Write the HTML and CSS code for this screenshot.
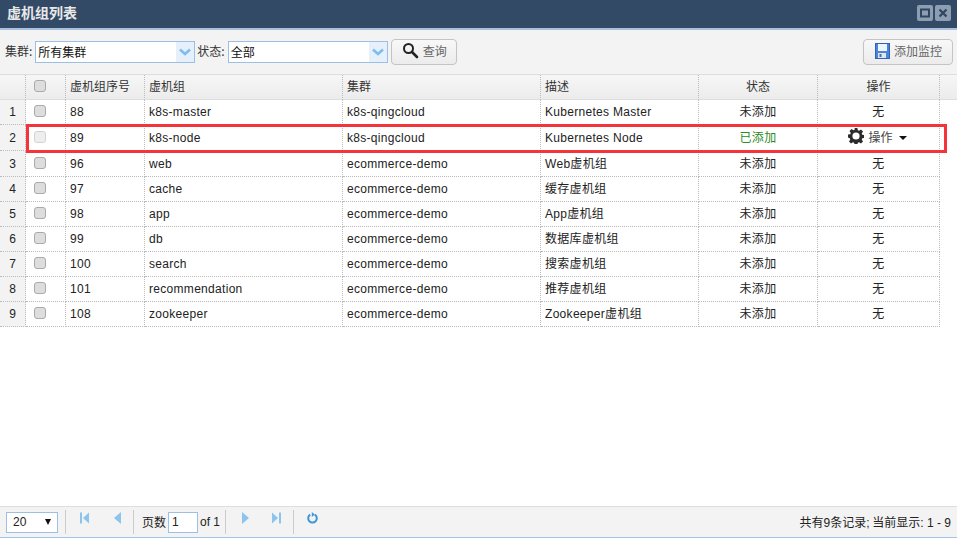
FILE: index.html
```html
<!DOCTYPE html>
<html>
<head>
<title>虚机组列表</title>
<meta charset="utf-8">
<link rel="stylesheet" href="styles.css">
</head>
<body>
<div class="panel">
  <div class="title-bar">
    <span class="title cjk">虚机组列表</span>
    <div class="win-tools">
      <span class="win-btn"><svg width="12" height="12" viewBox="0 0 12 12"><rect x="2" y="2.500" width="8" height="7" fill="none" stroke="#2f4560" stroke-width="2"/></svg></span>
      <span class="win-btn"><svg width="12" height="12" viewBox="0 0 12 12"><path d="M2.500 2.500l7 7M9.500 2.500l-7 7" stroke="#2f4560" stroke-width="2.200"/></svg></span>
    </div>
  </div>

  <div class="toolbar cjk">
    <label class="lbl">集群:</label>
    <div class="combo"><span class="combo-text">所有集群</span><span class="combo-arrow"><svg width="12" height="8" viewBox="0 0 12 8"><path d="M1 1.500l5 4.500 5-4.500" fill="none" stroke="#7dbdf0" stroke-width="2.500"/></svg></span></div>
    <label class="lbl lbl-state">状态:</label>
    <div class="combo"><span class="combo-text">全部</span><span class="combo-arrow"><svg width="12" height="8" viewBox="0 0 12 8"><path d="M1 1.500l5 4.500 5-4.500" fill="none" stroke="#7dbdf0" stroke-width="2.500"/></svg></span></div>
    <button class="btn btn-search"><svg width="17" height="17" viewBox="0 0 17 17"><circle cx="6.500" cy="6.500" r="4.500" fill="none" stroke="#222" stroke-width="2"/><path d="M10 10l5 5" stroke="#222" stroke-width="2.600" stroke-linecap="round"/></svg>查询</button>
    <button class="btn btn-add"><svg width="15" height="16" viewBox="0 0 15 16"><rect x="0.500" y="0.500" width="14" height="15" fill="#4a86d8" stroke="#2f62b8"/><rect x="3" y="1" width="9" height="7" fill="#eef4fc"/><rect x="3" y="10" width="8" height="5" fill="#dfe6ef"/><rect x="4.500" y="11" width="2" height="3" fill="#4a6fa8"/></svg>添加监控</button>
  </div>

  <div class="grid-wrap">
    <table class="grid">
      <colgroup>
        <col class="c-num"><col class="c-chk"><col class="c-id"><col class="c-group"><col class="c-cluster"><col class="c-desc"><col class="c-state"><col class="c-op"><col>
      </colgroup>
      <thead>
        <tr>
          <th class="num"></th><th class="chk-cell"><span class="chk chk-head"></span></th><th>虚机组序号</th><th>虚机组</th><th>集群</th><th>描述</th><th class="ctr">状态</th><th class="ctr">操作</th><th class="rest"></th>
        </tr>
      </thead>
      <tbody>
        <tr><td class="num">1</td><td class="chk-cell"><span class="chk"></span></td><td>88</td><td>k8s-master</td><td>k8s-qingcloud</td><td>Kubernetes Master</td><td class="ctr cjk">未添加</td><td class="ctr cjk">无</td></tr>
        <tr class="tall"><td class="num">2</td><td class="chk-cell"><span class="chk chk-off"></span></td><td>89</td><td>k8s-node</td><td>k8s-qingcloud</td><td>Kubernetes Node</td><td class="ctr cjk added">已添加</td><td class="ctr cjk op-cell"><span class="op-menu"><svg width="16" height="16" viewBox="0 0 16 16"><path d="M6.600 0h2.800l.4 2.200 1.300.6 1.900-1.300 2 2-1.300 1.900.6 1.300 2.200.4v2.800l-2.200.4-.6 1.300 1.300 1.900-2 2-1.900-1.300-1.300.6-.4 2.200H6.600l-.4-2.200-1.300-.6-1.900 1.300-2-2 1.300-1.900-.6-1.300L0 9.400V6.600l2.200-.4.6-1.300-1.300-1.900 2-2 1.900 1.300 1.300-.6z" fill="#2b2b2b"/><circle cx="8" cy="8" r="3.600" fill="#fff"/></svg>操作<i class="caret"></i></span></td></tr>
        <tr class="tall"><td class="num">3</td><td class="chk-cell"><span class="chk"></span></td><td>96</td><td>web</td><td>ecommerce-demo</td><td class="cjk"><span class="lat">Web</span>虚机组</td><td class="ctr cjk">未添加</td><td class="ctr cjk">无</td></tr>
        <tr><td class="num">4</td><td class="chk-cell"><span class="chk"></span></td><td>97</td><td>cache</td><td>ecommerce-demo</td><td class="cjk">缓存虚机组</td><td class="ctr cjk">未添加</td><td class="ctr cjk">无</td></tr>
        <tr><td class="num">5</td><td class="chk-cell"><span class="chk"></span></td><td>98</td><td>app</td><td>ecommerce-demo</td><td class="cjk"><span class="lat">App</span>虚机组</td><td class="ctr cjk">未添加</td><td class="ctr cjk">无</td></tr>
        <tr><td class="num">6</td><td class="chk-cell"><span class="chk"></span></td><td>99</td><td>db</td><td>ecommerce-demo</td><td class="cjk">数据库虚机组</td><td class="ctr cjk">未添加</td><td class="ctr cjk">无</td></tr>
        <tr><td class="num">7</td><td class="chk-cell"><span class="chk"></span></td><td>100</td><td>search</td><td>ecommerce-demo</td><td class="cjk">搜索虚机组</td><td class="ctr cjk">未添加</td><td class="ctr cjk">无</td></tr>
        <tr><td class="num">8</td><td class="chk-cell"><span class="chk"></span></td><td>101</td><td>recommendation</td><td>ecommerce-demo</td><td class="cjk">推荐虚机组</td><td class="ctr cjk">未添加</td><td class="ctr cjk">无</td></tr>
        <tr><td class="num">9</td><td class="chk-cell"><span class="chk"></span></td><td>108</td><td>zookeeper</td><td>ecommerce-demo</td><td class="cjk"><span class="lat">Zookeeper</span>虚机组</td><td class="ctr cjk">未添加</td><td class="ctr cjk">无</td></tr>
      </tbody>
    </table>
    <div class="red-box"></div>
  </div>

  <div class="pager cjk">
    <div class="page-size lat">20<i class="size-caret"></i></div>
    <span class="sep"></span>
    <div class="pg-btns pg-btns-first">
      <svg width="9" height="12" viewBox="0 0 9 12"><rect x="0" y="0.500" width="2" height="11" fill="#8cc4ee"/><path d="M9 0.500v11L3 6z" fill="#8cc4ee"/></svg>
      <svg width="9" height="12" viewBox="0 0 9 12"><path d="M8 0v12L1 6z" fill="#8cc4ee"/></svg>
    </div>
    <span class="sep"></span>
    <span class="pg-text">页数</span>
    <span class="pg-input lat">1</span>
    <span class="pg-of lat">of 1</span>
    <span class="sep"></span>
    <div class="pg-btns pg-btns-next">
      <svg width="9" height="12" viewBox="0 0 9 12"><path d="M1 0v12l7-6z" fill="#8cc4ee"/></svg>
      <svg width="9" height="12" viewBox="0 0 9 12"><path d="M0 0.500v11L6 6z" fill="#8cc4ee"/><rect x="7" y="0.500" width="2" height="11" fill="#8cc4ee"/></svg>
    </div>
    <span class="sep"></span>
    <div class="pg-btns pg-btns-refresh">
      <svg width="11" height="12" viewBox="0 0 11 12"><path d="M7.800 2.600A4.300 4.300 0 1 1 3.200 2.600" fill="none" stroke="#3f97d8" stroke-width="2"/><path d="M4.800 0v5l3-2.500z" fill="#3f97d8"/></svg>
    </div>
    <span class="pg-info">共有<span class="lat">9</span>条记录<span class="lat">;</span> 当前显示<span class="lat">: 1 - 9</span></span>
  </div>
</div>
</body>
</html>
```
FILE: styles.css
```css
html, body { margin: 0; padding: 0; height: 100%; }
body { font-family: "Liberation Sans", "Noto Sans CJK SC", sans-serif; font-size: 12px; color: #222; background: #fff; overflow: hidden; }

/* cjk text sits too low when the latin font leads the stack */
.cjk { font-family: "Noto Sans CJK SC", "Liberation Sans", sans-serif; }
.lat { font-family: "Liberation Sans", sans-serif; }

.panel { display: flex; flex-direction: column; height: 538px; }

.title-bar { display: flex; align-items: center; justify-content: space-between; height: 28px; background: #324a66; border-bottom: 2px solid #a9c0dc; flex: none; }
.title { margin-left: 7px; margin-bottom: 4px; color: #e8e8e8; font-size: 14px; font-weight: bold; }
.win-tools { display: flex; gap: 2px; margin-right: 6px; margin-bottom: 2px; }
.win-btn { display: flex; align-items: center; justify-content: center; width: 16px; height: 16px; background: #8d9db2; border-radius: 2px; }

.toolbar { display: flex; align-items: center; height: 44px; background: #f3f3f3; border-bottom: 1px solid #ddd; padding: 0 4px 0 5px; flex: none; }
.lbl { padding-bottom: 3px; font-size: 12px; color: #333; }
.lbl-state { margin-left: 2px; }
.combo { display: flex; box-sizing: border-box; width: 160px; height: 22px; margin-left: 3px; background: #fff; border: 1px solid #9cbfe6; }
.combo-text { flex: 1; font-size: 12px; line-height: 20px; color: #111; padding-left: 2px; }
.combo-arrow { display: flex; align-items: center; justify-content: center; width: 18px; background: #e6f0fb; }
.btn { display: flex; align-items: center; box-sizing: border-box; height: 26px; background: linear-gradient(#f8f8f8, #ececec); border: 1px solid #c4c4c4; border-radius: 4px; font: 12px "Noto Sans CJK SC", sans-serif; color: #666; padding: 0 0 3px; }
.btn-search { width: 66px; margin-left: 3px; padding-left: 10px; gap: 4px; }
.btn-add { width: 90px; margin-left: auto; padding-left: 11px; gap: 4px; }

.grid-wrap { position: relative; flex: 1; }
.grid { border-collapse: separate; border-spacing: 0; table-layout: fixed; width: 957px; }
.c-num { width: 26px; }
.c-chk { width: 40px; }
.c-id { width: 79px; }
.c-group { width: 198px; }
.c-cluster { width: 198px; }
.c-desc { width: 158px; }
.c-state { width: 119px; }
.c-op { width: 122px; }
.grid th { box-sizing: border-box; height: 25px; background: linear-gradient(#f6f6f6, #ececec); border-right: 1px dotted #bbb; border-bottom: 1px solid #ddd; font: 12px "Noto Sans CJK SC", sans-serif; color: #333; text-align: left; padding: 0 4px 4px; overflow: hidden; white-space: nowrap; }
.grid th.rest { border-right: 0; }
.grid td { box-sizing: border-box; height: 25px; border-right: 1px dotted #bbb; border-bottom: 1px dotted #bbb; font-size: 12px; color: #222; padding: 0 4px; letter-spacing: 0.300px; white-space: nowrap; overflow: hidden; }
.grid td.cjk { padding-bottom: 4px; }
.grid tr.tall td { height: 26px; }
.grid tr.tall td.cjk { padding-bottom: 3px; }
.grid tr.tall td.op-cell { padding-bottom: 0; }
.grid .num { background: #f3f3f3; text-align: center; padding: 0; letter-spacing: 0; }
.grid th.num { background: linear-gradient(#f6f6f6, #ececec); }
.grid .ctr { text-align: center; }
.grid .added { color: #2c8a1e; }
.grid .chk-cell { padding: 0 0 0 8px; text-align: left; }
.chk { display: inline-block; vertical-align: middle; box-sizing: border-box; width: 12px; height: 12px; margin-bottom: 2px; background: #ddd; border: 1px solid #aaa; border-radius: 3px; }
.chk-head { margin-bottom: 4px; }
.chk-off { background: #eee; border-color: #d2d2d2; }
.op-menu { display: inline-flex; align-items: center; gap: 4px; margin-right: 2px; color: #444; letter-spacing: 0; }
.caret { margin-left: 2px; margin-top: 4px; width: 0; height: 0; border-left: 4px solid transparent; border-right: 4px solid transparent; border-top: 4px solid #111; }

/* red highlight drawn over row 2 */
.red-box { position: absolute; left: 26px; top: 49px; width: 915px; height: 23px; border: 3px solid #f5333b; pointer-events: none; }

.pager { display: flex; align-items: center; height: 30px; background: #f3f3f3; border-top: 1px solid #ddd; border-bottom: 1px solid #a3c4ea; padding-left: 6px; flex: none; }
.page-size { position: relative; box-sizing: border-box; width: 52px; height: 21px; margin-right: 7px; background: #fff; border: 1px solid #9cbfe6; line-height: 19px; padding-left: 6px; font-size: 12px; }
.size-caret { position: absolute; right: 6px; top: 6px; width: 0; height: 0; border-left: 3.500px solid transparent; border-right: 3.500px solid transparent; border-top: 6px solid #111; }
.sep { flex: none; width: 1px; height: 24px; background: #ccc; }
.pg-btns { display: flex; margin-bottom: 8px; }
.pg-btns-first { gap: 24px; padding: 0 11px 0 14px; }
.pg-btns-next { gap: 22px; padding: 0 12px 0 15px; }
.pg-btns-refresh { padding-left: 13px; }
.pg-text { margin-left: 8px; margin-bottom: 2px; font-size: 12px; color: #222; }
.pg-input { box-sizing: border-box; width: 30px; height: 21px; margin-left: 2px; background: #fff; border: 1px solid #9cbfe6; line-height: 19px; padding-left: 3px; }
.pg-of { width: 25px; margin-left: 2px; }
.pg-info { margin-left: auto; margin-right: 6px; margin-bottom: 2px; font-size: 12px; color: #222; }
```
